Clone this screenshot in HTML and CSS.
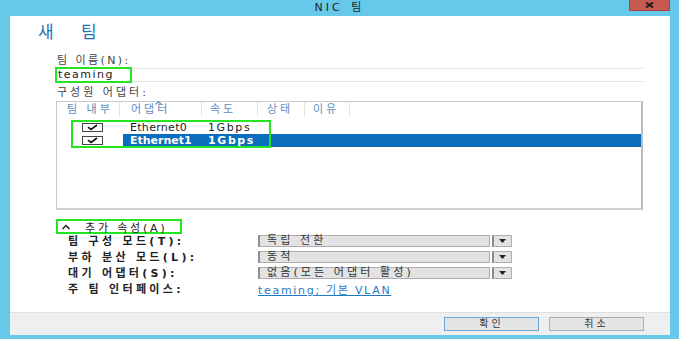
FILE: index.html
```html
<!DOCTYPE html>
<html lang="ko">
<head>
    <meta charset="UTF-8">
    <title>NIC 팀</title>
    <link rel="stylesheet" href="styles.css">
</head>
<body>
    <div class="window">
        <div class="titlebar">
            <span class="title">NIC 팀</span>
            <div class="close">
                <svg width="9" height="6" viewBox="0 0 9 6"><path d="M1 0.5 L8 5.5 M8 0.5 L1 5.5" stroke="#1a1a1a" stroke-width="1.8"/></svg>
            </div>
        </div>
        <div class="client">
            <div class="content">
                <h1>새 팀</h1>

                <div class="field-label">팀 이름(N):</div>
                <div class="name-input"><span class="name-value">teaming</span></div>

                <div class="field-label members">구성원 어댑터:</div>
                <div class="listview">
                    <div class="lv-header">
                        <div class="col col-team">팀 내부</div>
                        <div class="col col-adapter">어댑터</div>
                        <div class="col col-speed">속도</div>
                        <div class="col col-state">상태</div>
                        <div class="col col-reason">이유</div>
                        <svg class="sort-caret" width="7" height="4" viewBox="0 0 7 4"><path d="M0.5 3.5 L3.5 0.8 L6.5 3.5" stroke="#5d8dc2" stroke-width="1.2" fill="none"/></svg>
                    </div>
                    <div class="lv-body">
                        <div class="row">
                            <div class="check-cell">
                                <svg width="21" height="9" viewBox="0 0 21 9"><rect x="0.5" y="0.5" width="20" height="8" fill="#fff" stroke="#444"/><path d="M6 4.2 L9 6.5 L15 2" stroke="#111" stroke-width="1.6" fill="none"/></svg>
                            </div>
                            <div class="cells">
                                <span class="cell-name">Ethernet0</span>
                                <span class="cell-speed">1Gbps</span>
                            </div>
                        </div>
                        <div class="row selected">
                            <div class="check-cell">
                                <svg width="21" height="9" viewBox="0 0 21 9"><rect x="0.5" y="0.5" width="20" height="8" fill="#fff" stroke="#444"/><path d="M6 4.2 L9 6.5 L15 2" stroke="#111" stroke-width="1.6" fill="none"/></svg>
                            </div>
                            <div class="cells">
                                <span class="cell-name">Ethernet1</span>
                                <span class="cell-speed">1Gbps</span>
                            </div>
                        </div>
                        <div class="rows-mark"></div>
                    </div>
                </div>

                <div class="expander">
                    <svg width="8" height="6" viewBox="0 0 8 6"><path d="M0.5 5 L4 1.5 L7.5 5" stroke="#222" stroke-width="1.5" fill="none"/></svg>
                    <span>추가 속성(A)</span>
                </div>

                <div class="props">
                    <div class="prop-label">팀 구성 모드(T):</div>
                    <div class="combo">
                        <div class="combo-value">독립 전환</div>
                        <div class="combo-arrow"><svg width="7" height="4" viewBox="0 0 7 4"><path d="M0 0 L7 0 L3.5 4 Z" fill="#222"/></svg></div>
                    </div>

                    <div class="prop-label">부하 분산 모드(L):</div>
                    <div class="combo">
                        <div class="combo-value">동적</div>
                        <div class="combo-arrow"><svg width="7" height="4" viewBox="0 0 7 4"><path d="M0 0 L7 0 L3.5 4 Z" fill="#222"/></svg></div>
                    </div>

                    <div class="prop-label">대기 어댑터(S):</div>
                    <div class="combo">
                        <div class="combo-value">없음(모든 어댑터 활성)</div>
                        <div class="combo-arrow"><svg width="7" height="4" viewBox="0 0 7 4"><path d="M0 0 L7 0 L3.5 4 Z" fill="#222"/></svg></div>
                    </div>

                    <div class="prop-label">주 팀 인터페이스:</div>
                    <a class="prop-link" href="#">teaming; 기본 VLAN</a>
                </div>
            </div>
            <div class="footer">
                <button class="btn btn-default">확인</button>
                <button class="btn">취소</button>
            </div>
        </div>
    </div>
</body>
</html>
```

FILE: styles.css
```css
body {
    margin: 0;
    background: #66c9ea;
    font-family: "DejaVu Sans", "Noto Sans CJK KR", sans-serif;
    font-size: 11px;
    color: #333;
}
.window {
    position: relative;
    width: 679px;
    height: 339px;
    display: flex;
    flex-direction: column;
}
.titlebar {
    height: 16px;
    display: flex;
    align-items: center;
    justify-content: center;
}
.title {
    line-height: 16px;
    letter-spacing: 3px;
    word-spacing: 2px;
    color: #222;
}
.close {
    position: absolute;
    top: 0;
    right: 9px;
    width: 41px;
    height: 11px;
    background: #c75a50;
    border: 1px solid #a8443c;
    border-top: none;
    box-sizing: border-box;
    display: flex;
    align-items: center;
    justify-content: center;
}
.client {
    flex: 1;
    margin: 0 9px 4px 10px;
    background: #fff;
    display: flex;
    flex-direction: column;
}
.content {
    flex: 1;
    padding: 0 26px 0 28px;
}
h1 {
    margin: 6px 0 0;
    font-size: 17px;
    font-weight: normal;
    line-height: 20px;
    letter-spacing: 11px;
    color: #1f74b5;
}
.field-label {
    margin: 12px 0 0 19px;
    line-height: 13px;
    letter-spacing: 2.4px;
    color: #444;
}
.field-label.members {
    margin-top: 4px;
    letter-spacing: 3px;
}
.name-input {
    margin: 1px 1px 0 19px;
    height: 14px;
    border-top: 1px solid #e3e3e3;
    border-bottom: 1px solid #e3e3e3;
    box-sizing: border-box;
    display: flex;
    align-items: center;
}
.name-value {
    padding: 0 16px 0 1px;
    line-height: 12px;
    letter-spacing: 1.5px;
    color: #222;
    outline: 2px solid #22e622;
}
.listview {
    margin: 2px 1px 0 18px;
    height: 109px;
    border: 1px solid #c9c9c9;
    border-right: 2px solid #bdbdbd;
    border-bottom: 2px solid #d0d0d0;
    box-sizing: border-box;
}
.lv-header {
    position: relative;
    height: 15px;
    display: flex;
}
.col {
    border-right: 1px solid #e6e6e6;
    padding-left: 8px;
    box-sizing: border-box;
    line-height: 15px;
    letter-spacing: 3px;
    color: #5d8dc2;
    white-space: nowrap;
}
.col-team { width: 63px; padding-left: 10px; }
.col-adapter { width: 82px; padding-left: 11px; }
.col-speed { width: 56px; }
.col-state { width: 47px; padding-left: 9px; }
.col-reason { width: 45px; }
.sort-caret {
    position: absolute;
    left: 98px;
    top: -1px;
}
.lv-body {
    position: relative;
    padding-top: 4px;
}
.row {
    height: 13px;
    display: flex;
}
.check-cell {
    width: 66px;
    padding-left: 25px;
    box-sizing: border-box;
    display: flex;
    align-items: center;
}
.cells {
    flex: 1;
    display: flex;
    align-items: center;
    padding-left: 7px;
    letter-spacing: 0.3px;
    color: #222;
}
.row.selected .cells {
    background: #0a6ebd;
    color: #fff;
    font-weight: bold;
    letter-spacing: 0;
}
.cell-name {
    width: 78px;
}
.cell-speed {
    letter-spacing: 1.6px;
}
.rows-mark {
    position: absolute;
    left: 14px;
    top: 3px;
    width: 200px;
    height: 28px;
    border: 2px solid #22e622;
    box-sizing: border-box;
}
.expander {
    margin: 9px 0 0 18px;
    width: 126px;
    height: 15px;
    border: 2px solid #22e622;
    box-sizing: border-box;
    display: flex;
    align-items: center;
    gap: 15px;
    padding-left: 4px;
    letter-spacing: 2.8px;
    color: #222;
}
.props {
    margin: 1px 0 0 30px;
    display: grid;
    grid-template-columns: 190px 254px;
    grid-auto-rows: 16px;
}
.prop-label {
    line-height: 13px;
    font-weight: bold;
    letter-spacing: 3.3px;
    color: #222;
    white-space: nowrap;
}
.combo {
    height: 12px;
    display: flex;
    gap: 2px;
}
.combo-value {
    flex: 1;
    background: #e3e3e3;
    border: 1px solid #adadad;
    border-left: 2px solid #8c8c8c;
    box-sizing: border-box;
    padding-left: 7px;
    line-height: 10px;
    letter-spacing: 3.1px;
    color: #333;
    white-space: nowrap;
}
.combo-arrow {
    width: 20px;
    background: #e3e3e3;
    border: 1px solid #adadad;
    border-left: 2px solid #8c8c8c;
    box-sizing: border-box;
    display: flex;
    align-items: center;
    justify-content: center;
}
.prop-link {
    align-self: start;
    margin-top: 1px;
    line-height: 13px;
    letter-spacing: 1.7px;
    color: #1f7ac6;
    white-space: nowrap;
}
.footer {
    height: 23px;
    background: #efefef;
    border-top: 1px solid #e0e0e0;
    box-sizing: border-box;
    display: flex;
    justify-content: flex-end;
    gap: 10px;
    padding: 4px 26px 0 0;
}
.btn {
    width: 95px;
    height: 14px;
    padding: 0;
    background: #e4e4e4;
    border: 1px solid #acacac;
    font-family: inherit;
    font-size: 10px;
    line-height: 12px;
    letter-spacing: 3px;
    color: #333;
}
.btn-default {
    border-color: #6aa8dc;
}
```
